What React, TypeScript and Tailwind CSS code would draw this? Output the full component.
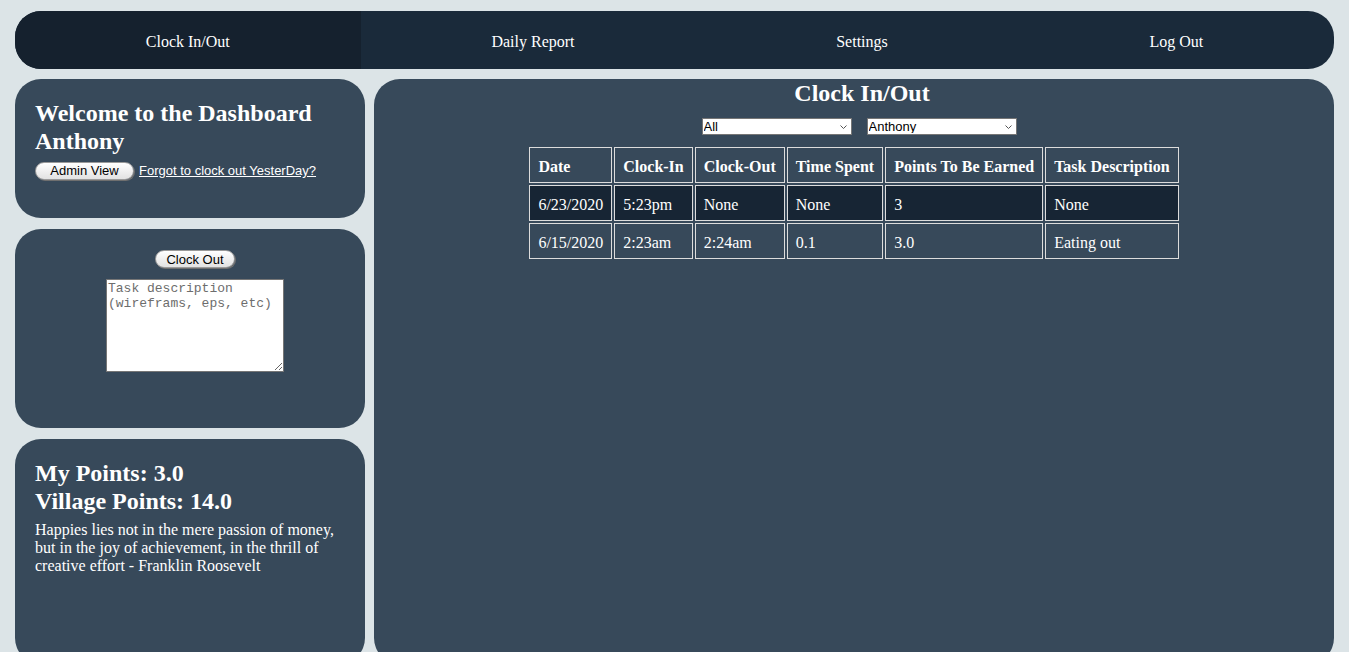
import React from 'react';

const rows = [
  { date: '6/23/2020', inTime: '5:23pm', outTime: 'None', spent: 'None', points: '3', task: 'None', dark: true },
  { date: '6/15/2020', inTime: '2:23am', outTime: '2:24am', spent: '0.1', points: '3.0', task: 'Eating out', dark: false },
];

const headers = ['Date', 'Clock-In', 'Clock-Out', 'Time Spent', 'Points To Be Earned', 'Task Description'];

const navItems = ['Clock In/Out', 'Daily Report', 'Settings', 'Log Out'];

function PillButton({ label, width }: { label: string; width: string }) {
  return (
    <button
      className={`h-[18px] ${width} rounded-full border border-[#9a9a9a] bg-gradient-to-b from-white to-[#e2e2e2] font-['Liberation_Sans',sans-serif] text-[13px] leading-none text-black shadow-[1px_1px_0_#6f6f6f]`}
      type="button"
    >
      {label}
    </button>
  );
}

function Dropdown({ value, width }: { value: string; width: string }) {
  return (
    <div className={`relative h-[17px] ${width}`}>
      <select className="block h-full w-full appearance-none border border-[#767676] bg-white pl-px font-['Liberation_Sans',sans-serif] text-[13px] leading-none text-black">
        <option>{value}</option>
      </select>
      <svg className="pointer-events-none absolute right-[5px] top-[7px] h-[4px] w-[7px]" viewBox="0 0 7 4" fill="none">
        <path d="M0.5 0.5 L3.5 3.5 L6.5 0.5" stroke="#555" strokeWidth="1" />
      </svg>
    </div>
  );
}

export default function App() {
  return (
    <div className="h-[652px] overflow-hidden bg-[#dce4e7] px-[15px] pt-[11px] font-['Liberation_Serif',serif] text-white">
      <nav className="flex h-[58px] overflow-hidden rounded-[26px] bg-[#1a2a3a]">
        {navItems.map((item, i) => (
          <a
            key={item}
            className={`flex grow items-center justify-center pt-1 text-base ${i === 0 ? 'bg-[#15212e]' : ''}`}
          >
            {item}
          </a>
        ))}
      </nav>

      <div className="mt-[10px] flex gap-[9px]">
        <div className="flex w-[350px] shrink-0 flex-col gap-[11px]">
          <section className="h-[139px] rounded-[26px] bg-[#37495a] px-5 pt-5">
            <h2 className="mb-1.5 text-2xl font-bold leading-7">Welcome to the Dashboard Anthony</h2>
            <div className="flex items-center gap-[5px]">
              <PillButton label="Admin View" width="w-[99px]" />
              <a className="font-['Liberation_Sans',sans-serif] text-[13px] underline">Forgot to clock out YesterDay?</a>
            </div>
          </section>

          <section className="flex h-[199px] flex-col items-center rounded-[26px] bg-[#37495a] pl-[10px] pt-[21px]">
            <PillButton label="Clock Out" width="w-[80px]" />
            <textarea
              className="mt-[11px] h-[93px] w-[178px] resize border border-[#767676] bg-white px-px py-px font-['Liberation_Mono',monospace] text-[13px] leading-[15px] text-black placeholder:text-[#6d6d6d]"
              placeholder="Task description (wireframs, eps, etc)"
            />
          </section>

          <section className="h-[225px] rounded-[26px] bg-[#37495a] px-5 pt-5">
            <h2 className="text-2xl font-bold leading-7">My Points: 3.0</h2>
            <h2 className="mb-1.5 text-2xl font-bold leading-7">Village Points: 14.0</h2>
            <p className="text-base leading-[18px]">
              Happies lies not in the mere passion of money, but in the joy of achievement, in the thrill of creative effort - Franklin Roosevelt
            </p>
          </section>
        </div>

        <main className="flex h-[585px] grow flex-col items-center rounded-[26px] bg-[#37495a]">
          <h1 className="pl-4 text-2xl font-bold leading-7">Clock In/Out</h1>
          <div className="mt-[11px] flex gap-[15px] pl-[10px]">
            <Dropdown value="All" width="w-[150px]" />
            <Dropdown value="Anthony" width="w-[150px]" />
          </div>
          <table className="mt-[10px] border-separate border-spacing-[2px] text-base">
            <thead>
              <tr>
                {headers.map((h) => (
                  <th key={h} className="h-[36px] border border-[#dcdcdc] px-2 pt-1 text-left font-bold">
                    {h}
                  </th>
                ))}
              </tr>
            </thead>
            <tbody>
              {rows.map((r) => (
                <tr key={r.date} className={r.dark ? 'bg-[#172534]' : ''}>
                  {[r.date, r.inTime, r.outTime, r.spent, r.points, r.task].map((c, i) => (
                    <td key={i} className="h-[36px] border border-[#dcdcdc] px-2 pt-1">
                      {c}
                    </td>
                  ))}
                </tr>
              ))}
            </tbody>
          </table>
        </main>
      </div>
    </div>
  );
}
